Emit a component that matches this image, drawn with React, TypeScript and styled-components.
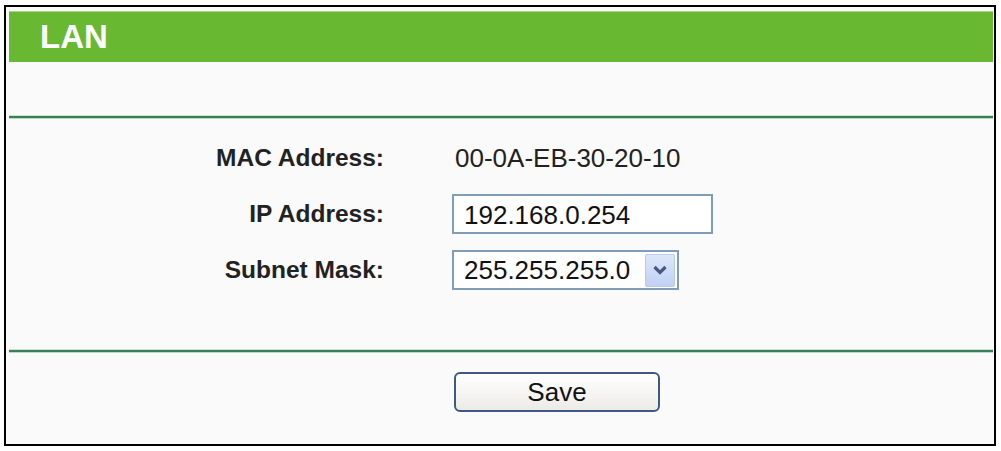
import styled, { createGlobalStyle } from 'styled-components';

const GlobalStyle = createGlobalStyle`
  html, body {
    margin: 0;
    padding: 0;
    background: #ffffff;
  }
  body {
    font-family: "Liberation Sans", Arial, sans-serif;
  }
`;

const App = () => {
    return (
        <>
            <GlobalStyle />
            <Page>
                <Frame>
                    <Header>LAN</Header>
                    <Spacer />
                    <Divider />
                    <Form>
                        <Row>
                            <Label>MAC Address:</Label>
                            <Value>00-0A-EB-30-20-10</Value>
                        </Row>
                        <Row>
                            <Label>IP Address:</Label>
                            <TextInput defaultValue="192.168.0.254" />
                        </Row>
                        <Row>
                            <Label>Subnet Mask:</Label>
                            <Select>
                                <SelectText>255.255.255.0</SelectText>
                                <SelectButton>
                                    <svg width="16" height="12" viewBox="0 0 16 12">
                                        <path d="M2.5 3 L8 8.5 L13.5 3" fill="none" stroke="#47597d" strokeWidth="3.2" />
                                    </svg>
                                </SelectButton>
                            </Select>
                        </Row>
                    </Form>
                    <Divider />
                    <Footer>
                        <SaveButton>Save</SaveButton>
                    </Footer>
                </Frame>
            </Page>
        </>
    );
};

export default App;

// Styled Components
const Page = styled.div`
  width: 1001px;
  height: 451px;
  padding: 5px 5px 5px 4px;
  box-sizing: border-box;
`;

const Frame = styled.div`
  height: 441px;
  box-sizing: border-box;
  border: 2px solid #000;
  background: #fafafa;
  padding: 4px 1px 0 3px;
  display: flex;
  flex-direction: column;
`;

const Header = styled.div`
  height: 51px;
  background: #68b832;
  border-top: 1px solid #a7d68a;
  box-sizing: border-box;
  color: #fff;
  font-weight: bold;
  font-size: 33px;
  line-height: 50px;
  padding-left: 31px;
`;

const Spacer = styled.div`
  height: 54px;
`;

const Divider = styled.div`
  height: 2px;
  background: #3d7d57;
  box-shadow: 0 1px 0 #b7dcc2, 0 -1px 0 #c9e5d1;
`;

const Form = styled.div`
  height: 232px;
  padding-top: 12px;
  box-sizing: border-box;
  display: flex;
  flex-direction: column;
`;

const Row = styled.div`
  display: grid;
  grid-template-columns: 375px 1fr;
  column-gap: 68px;
  align-items: center;
  height: 56px;
`;

const Label = styled.div`
  text-align: right;
  font-weight: bold;
  font-size: 24.5px;
  color: #222;
`;

const Value = styled.div`
  font-size: 26px;
  color: #222;
  padding-left: 3px;
`;

const TextInput = styled.input`
  width: 261px;
  height: 40px;
  box-sizing: border-box;
  border: 2px solid #7f9db9;
  background: #fff;
  font-family: "Liberation Sans", Arial, sans-serif;
  font-size: 26px;
  color: #111;
  padding: 2px 10px 0;
  outline: none;
`;

const Select = styled.div`
  width: 227px;
  height: 40px;
  box-sizing: border-box;
  border: 2px solid #7f9db9;
  background: #fff;
  display: flex;
  align-items: center;
  justify-content: space-between;
  padding: 0 2px 0 10px;
`;

const SelectText = styled.span`
  font-size: 26px;
  color: #111;
`;

const SelectButton = styled.span`
  width: 30px;
  height: 33px;
  box-sizing: border-box;
  border: 1px solid #b9c9ef;
  border-radius: 2px;
  background: linear-gradient(#dde6fb, #c1d1f6);
  display: flex;
  align-items: center;
  justify-content: center;
`;

const Footer = styled.div`
  flex: 1;
  display: flex;
  justify-content: flex-start;
  padding-top: 20px;
  padding-left: 445px;
`;

const SaveButton = styled.button`
  width: 206px;
  height: 40px;
  box-sizing: border-box;
  border: 2px solid #3e5a82;
  border-radius: 6px;
  background: linear-gradient(#ffffff, #ecebe6);
  font-family: "Liberation Sans", Arial, sans-serif;
  font-size: 26px;
  color: #111;
  cursor: pointer;
`;
